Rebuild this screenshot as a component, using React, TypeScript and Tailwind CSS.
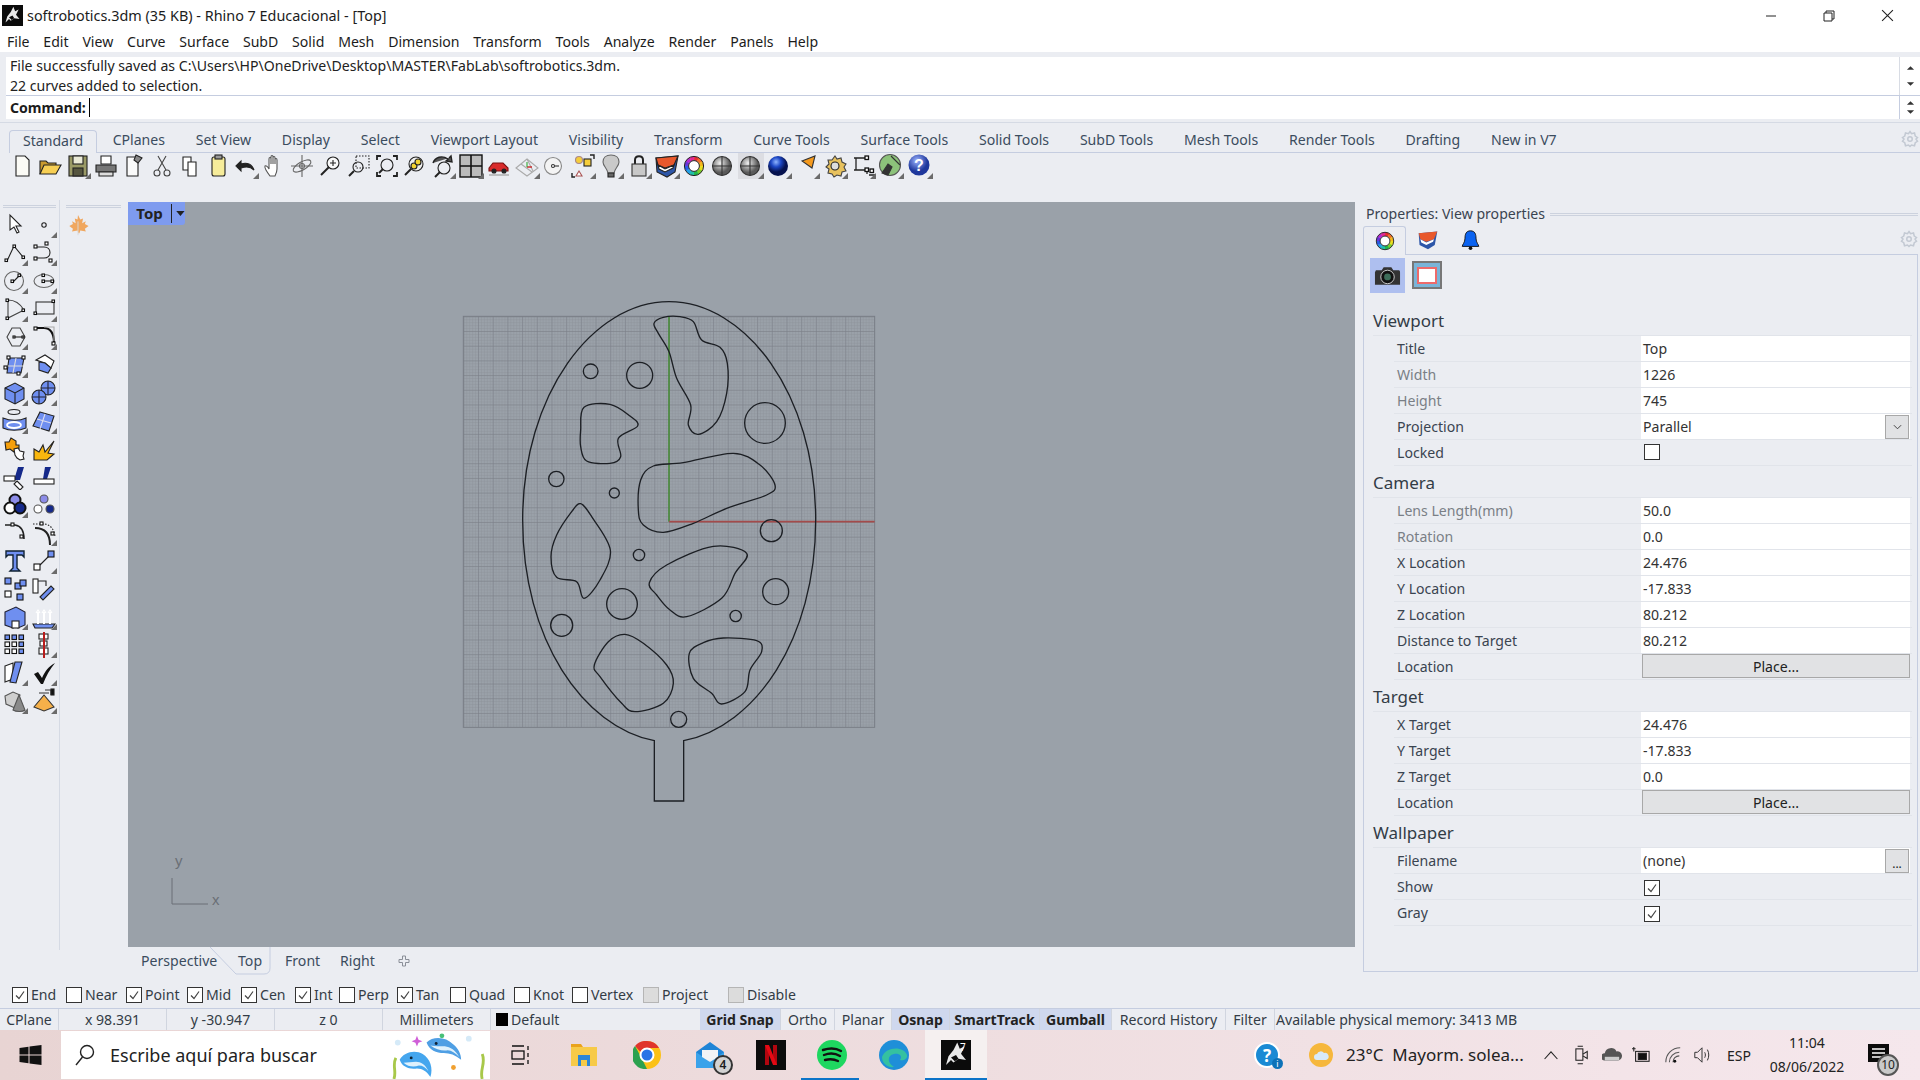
import type { ReactNode } from 'react';

const sans = "font-['Noto_Sans','Open_Sans',sans-serif]";

// smooth closed curve through points (catmull-rom to bezier)
const blob = (p: number[][]) => {
  const n = p.length;
  let d = `M${p[0][0]} ${p[0][1]}`;
  for (let i = 0; i < n; i++) {
    const a = p[(i - 1 + n) % n], b = p[i], c = p[(i + 1) % n], e = p[(i + 2) % n];
    d += ` C${b[0] + (c[0] - a[0]) / 6} ${b[1] + (c[1] - a[1]) / 6} ${c[0] - (e[0] - b[0]) / 6} ${c[1] - (e[1] - b[1]) / 6} ${c[0]} ${c[1]}`;
  }
  return d + 'Z';
};

const blobs = [
  [[612, 100], [640, 82], [690, 80], [730, 95], [755, 150], [810, 172], [832, 220], [830, 310], [800, 395], [745, 433], [715, 405], [722, 345], [680, 265], [657, 185], [625, 130]],
  [[392, 420], [402, 352], [480, 343], [540, 378], [563, 408], [505, 445], [512, 500], [480, 520], [410, 513], [392, 470]],
  [[565, 660], [572, 570], [610, 528], [700, 518], [850, 490], [930, 525], [975, 585], [950, 615], [830, 655], [730, 700], [640, 727], [580, 705]],
  [[392, 641], [425, 680], [481, 780], [450, 870], [402, 925], [380, 875], [320, 862], [303, 800], [320, 735], [365, 665]],
  [[598, 878], [650, 825], [790, 769], [890, 790], [855, 850], [815, 925], [710, 980], [660, 960], [620, 915]],
  [[433, 1125], [475, 1055], [525, 1033], [580, 1060], [650, 1125], [670, 1180], [640, 1240], [555, 1265], [515, 1240], [450, 1160]],
  [[718, 1090], [760, 1058], [820, 1044], [920, 1052], [935, 1085], [900, 1140], [885, 1205], [815, 1242], [785, 1210], [730, 1165]],
];

const holes = [[422, 244, 22], [569, 256, 39], [945, 399, 61], [319, 567, 23], [493, 609, 15], [964, 722, 33], [567, 795, 17], [516, 942, 46], [977, 905, 39], [857, 978, 17], [335, 1006, 33], [686, 1288, 24]];

const Drawing = () => (
  <svg viewBox="0 0 1350 1560" className="absolute left-[322px] top-[88px] w-[450px] h-[520px]" fill="none">
    <defs>
      <pattern id="minor" x="40" y="79" width="8.81" height="8.81" patternUnits="userSpaceOnUse">
        <path d="M0 0H8.81M0 0V8.81" stroke="#8a9098" strokeWidth="2.4" />
      </pattern>
      <pattern id="major" x="40" y="79" width="44.07" height="44.07" patternUnits="userSpaceOnUse">
        <path d="M0 0H44.07M0 0V44.07" stroke="#797e86" strokeWidth="3" />
      </pattern>
    </defs>
    <rect x="40" y="79" width="1234" height="1233" fill="url(#minor)" />
    <rect x="40" y="79" width="1234" height="1233" fill="url(#major)" stroke="#797e86" strokeWidth="3" />
    <path d="M657 695V79" stroke="#4a8a3c" strokeWidth="5" />
    <path d="M657 695H1274" stroke="#a34b4b" strokeWidth="5" />
    <g stroke="#1c1f24" strokeWidth="4">
      <path d="M613 1352C400 1310 218 1050 218 690C218 310 430 35 657 35C885 35 1097 310 1097 690C1097 1050 915 1310 701 1352V1533H613Z" />
      {blobs.map((b, i) => <path key={i} d={blob(b)} />)}
      {holes.map((c, i) => <circle key={i} cx={c[0]} cy={c[1]} r={c[2]} />)}
    </g>
  </svg>
);

// rainbow ring with dark rims, drawn as short arcs
const wheelColors = ['#e8302c', '#f0702a', '#f5b81e', '#e8e020', '#7ccf2a', '#22b84a', '#22c0a8', '#22a0e8', '#2a5ce8', '#6a35d8', '#b52ad0', '#e02a90'];
const Wheel = ({ cx, cy, r }: { cx: number; cy: number; r: number }) => (
  <g fill="none">
    {wheelColors.map((c, i) => {
      const a = (i / 12) * 2 * Math.PI - Math.PI / 2;
      const b = ((i + 1.1) / 12) * 2 * Math.PI - Math.PI / 2;
      return <path key={c} d={`M${cx + r * Math.cos(a)} ${cy + r * Math.sin(a)}A${r} ${r} 0 0 1 ${cx + r * Math.cos(b)} ${cy + r * Math.sin(b)}`} stroke={c} strokeWidth={r * 0.55} />;
    })}
    <circle cx={cx} cy={cy} r={r * 1.28} stroke="#222" strokeWidth="1" />
    <circle cx={cx} cy={cy} r={r * 0.72} stroke="#222" strokeWidth="1" fill="#fff" />
  </g>
);

// base for the small toolbar pictures, 26x26 with the grey flyout corner
const Ico = ({ fly = true, children }: { fly?: boolean; children: ReactNode }) => (
  <svg viewBox="0 0 26 26" className="w-[26px] h-[26px] shrink-0" fill="none" stroke="#222" strokeWidth="1.1">
    {children}
    {fly && <polygon points="26,26 26,20 20,26" fill="#6b6b6b" stroke="none" />}
  </svg>
);

const sq = (x: number, y: number, s = 3.5, f = '#fff') => <rect x={x} y={y} width={s} height={s} fill={f} stroke="#111" />;
const blue = '#6f8ff0';

const topIcons: [ReactNode, boolean][] = [
  [<path d="M7 3h9l4 4v16H7z" fill="#fbfbf6" />, false],
  [<><path d="M3 21V8h6l2 2h8v3" fill="#c99a2e" /><path d="M3 21l4-9h17l-5 9z" fill="#f7cf54" /></>, false],
  [<><rect x="4" y="3" width="18" height="20" fill="#9a9a66" /><rect x="8" y="3" width="10" height="8" fill="#e9e9d6" /><rect x="8" y="15" width="10" height="8" fill="#55553f" /></>, true],
  [<><path d="M8 3h10v8H8z" fill="#fff" /><path d="M3 12h20v7H3z" fill="#777" /><path d="M6 19h14v4H6z" fill="#ddd" /></>, false],
  [<><path d="M6 4h11v19H6z" fill="#fafafa" /><path d="M15 2l6 3-4 5-4-3z" fill="#888" /></>, false],
  [<g stroke="#444"><path d="M9 3l8 14M17 3L9 17" /><circle cx="8" cy="20" r="3" /><circle cx="18" cy="20" r="3" /></g>, false],
  [<g fill="#fff"><path d="M6 4h8v13H6z" /><path d="M11 9h8v14h-8z" /></g>, false],
  [<><rect x="7" y="4" width="13" height="19" rx="2" fill="#f6ec9a" /><rect x="10" y="2" width="7" height="4" fill="#999" /></>, false],
  [<path d="M3 13l5-5v3c6-2 11 0 13 6-3-3-7-4-13-2v3z" fill="#222" />, true],
  [<path d="M9 23c-3-4-6-8-5-10 1-1 3 1 4 3V6c0-2 2-2 2 0v5V4c0-2 2-2 2 0v7V5c0-2 2-2 2 0v6V7c0-2 2-2 2 0v9c0 3-1 5-2 7z" fill="#fff" stroke="#555" />, false],
  [<g stroke="#666"><circle cx="13" cy="13" r="2.5" /><path d="M2 13h22M13 2v22" /><ellipse cx="13" cy="13" rx="10" ry="4" transform="rotate(-30 13 13)" /></g>, false],
  [<><circle cx="15" cy="10" r="6" fill="#f8f8f8" /><path d="M11 14l-8 8" strokeWidth="2" /><path d="M12 10h6M15 7v6" /></>, false],
  [<><circle cx="12" cy="14" r="5" /><path d="M8 18l-5 5" strokeWidth="2" /><rect x="10" y="3" width="13" height="12" strokeDasharray="1.5 1.5" /></>, false],
  [<><circle cx="13" cy="12" r="6" /><path d="M9 16l-4 4" strokeWidth="2" /><path d="M3 7V3h4M19 3h4v4M3 19v4h4M23 19v4h-4" strokeWidth="1.8" /></>, false],
  [<><circle cx="14" cy="11" r="7" fill="#eee" /><path d="M9 16l-6 6" strokeWidth="2" /><circle cx="12" cy="13" r="3" fill="#f3d332" /><circle cx="16" cy="9" r="3" fill="#f3d332" /></>, false],
  [<><circle cx="14" cy="15" r="6" /><path d="M10 19l-5 5" strokeWidth="2" /><path d="M3 10c2-6 9-8 15-4l-2 2 6 1-1-6-2 2" strokeWidth="1.4" fill="#555" /></>, true],
  [<><rect x="2" y="2" width="22" height="22" fill="#bbb" stroke="#111" strokeWidth="1.4" /><path d="M13 2v22M2 13h22" stroke="#111" strokeWidth="1.6" /></>, true],
  [<><path d="M3 15l4-5h10l5 5v3H3z" fill="#d92b2b" stroke="#7a1010" /><circle cx="8" cy="18" r="2" fill="#222" /><circle cx="18" cy="18" r="2" fill="#222" /><path d="M3 22h20" stroke="#999" /></>, false],
  [<g stroke="#aaa"><path d="M2 15l11-9 11 9-11 8z" /><path d="M7 11l11 8M13 6l6 12" /><path d="M13 14h5" stroke="#c22" strokeWidth="1.4" /><path d="M13 14V9" stroke="#3a3" /></g>, true],
  [<g stroke="#888"><circle cx="11" cy="13" r="8.5" fill="#f4f4f4" /><path d="M11 13h6" stroke="#333" /><circle cx="11" cy="13" r="1.5" fill="#fff" stroke="#333" /></g>, false],
  [<><circle cx="9" cy="7" r="3.5" fill="#f5cd3a" stroke="#a88" /><rect x="14" y="6" width="7" height="7" fill="#f5cd3a" /><path d="M9 18l-3 5h6z" stroke="#a55" fill="#fff" /><path d="M2 20v4h3M24 6V2h-4" strokeWidth="1.4" /></>, true],
  [<><path d="M13 2c5 0 8 3 8 7 0 4-4 6-5 11h-6C9 15 5 13 5 9c0-4 3-7 8-7z" fill="#c9c9c9" stroke="#666" /><path d="M10 20h6v4h-6z" fill="#666" /></>, true],
  [<><path d="M9 11V7c0-5 8-5 8 0v4" strokeWidth="2" /><rect x="6" y="11" width="14" height="12" fill="#c8c8c8" stroke="#333" /></>, true],
  [<><path d="M2 5l22-2-3 16-8 5-10-5z" fill="#2d56a8" /><path d="M2 5l22-2-4 9-9 3-7-3z" fill="#e8582c" /><path d="M4 12l7 4 9-4-1 3-8 4-6-3z" fill="#fff" /></>, true],
  [<Wheel cx={12} cy={13} r={7.5} />, false],
  [<><defs><radialGradient id="sp1" cx=".4" cy=".35"><stop offset="0" stopColor="#f2f2f2" /><stop offset="1" stopColor="#5a5a5a" /></radialGradient></defs><circle cx="12" cy="13" r="9.5" fill="url(#sp1)" stroke="#333" /><path d="M12 3.5v19M2.5 13h19" stroke="#333" /></>, false],
  [<><rect x="0" y="0" width="26" height="26" fill="#dcdde2" stroke="none" /><circle cx="12" cy="13" r="9.5" fill="url(#sp1)" stroke="#333" /><path d="M12 3.5v19M2.5 13h19" stroke="#333" /></>, true],
  [<><defs><radialGradient id="sp2" cx=".4" cy=".3"><stop offset="0" stopColor="#8fb4ff" /><stop offset=".5" stopColor="#1c46c4" /><stop offset="1" stopColor="#06124f" /></radialGradient></defs><circle cx="12" cy="13" r="10" fill="url(#sp2)" stroke="none" /></>, true],
  [<path d="M8 8L21 3l-3 12z" fill="#f59a1e" stroke="#333" />, true],
  [<g><path d="M13 3l2 3 4-1 1 4 4 2-2 3 2 4-4 1-1 4-4-1-3 2-2-3-4-1 1-4-3-2 3-3-1-4 4 0z" fill="#e8c25e" stroke="#444" /><circle cx="13" cy="13" r="4" fill="#ddd" /></g>, true],
  [<g strokeWidth="1.3"><path d="M4 5h12M4 17h13v4M6 5v12M19 22h6" />{sq(15, 3)}{sq(15, 15)}{sq(20, 16)}</g>, true],
  [<><circle cx="12" cy="12" r="10.5" fill="#8cc27a" stroke="#555" /><path d="M4 20l6-9 4 3-4 8zM13 3l9 9" stroke="#333" fill="#333" /></>, true],
  [<><defs><radialGradient id="sp3" cx=".4" cy=".3"><stop offset="0" stopColor="#9db4ff" /><stop offset="1" stopColor="#1e379c" /></radialGradient></defs><circle cx="12" cy="12" r="10.5" fill="url(#sp3)" stroke="none" /><text x="12" y="18" textAnchor="middle" fontSize="16" fontWeight="700" fill="#fff" stroke="none" fontFamily="Liberation Sans">?</text></>, true],
];

const leftIcons: [ReactNode, boolean][] = [
  [<path d="M8 3v15l4-3 3 6 2-1-3-6h5z" fill="#fff" />, false],
  [<circle cx="13" cy="13" r="2.2" />, true],
  [<><path d="M5 21l7-15 9 11" />{sq(3, 19, 2.5)}{sq(11, 5, 2.5)}{sq(20, 16, 2.5)}</>, true],
  [<><path d="M5 7h8c8 0 8 11 0 11H5" />{sq(3, 5, 3)}{sq(14, 2, 3)}{sq(3, 17, 3)}{sq(18, 19, 3)}</>, true],
  [<><circle cx="12" cy="13" r="9.5" stroke="#666" /><path d="M11 14l6-6" />{sq(9, 12, 2.5)}{sq(16, 6, 2.5)}</>, true],
  [<><ellipse cx="13" cy="13" rx="10" ry="6.5" stroke="#666" /><path d="M13 13h9" />{sq(11, 6, 2.5)}{sq(11, 12, 2.5)}{sq(20, 12, 2.5)}</>, true],
  [<><path d="M6 4c8 0 13 5 16 10L6 22z" stroke="#444" />{sq(4, 3, 2.5)}{sq(20, 13, 2.5)}{sq(4, 21, 2.5)}</>, true],
  [<><rect x="5" y="6" width="18" height="12" stroke="#333" />{sq(3, 16, 2.5)}{sq(21, 4, 2.5)}</>, true],
  [<><path d="M10 4h8l5 9-5 9h-8l-5-9z" stroke="#444" /><path d="M13 13h7" />{sq(11, 12, 2)}{sq(20, 12, 2)}</>, true],
  [<><path d="M5 4h8c6 0 10 5 10 14" stroke="#111" strokeWidth="2.2" /><path d="M13 3h10v14" stroke="#aaa" />{sq(3, 3, 3)}{sq(21, 18, 3)}</>, true],
  [<><path d="M7 6h15l-3 15H5z" fill={blue} /><path d="M6 14h15M14 6l-3 15" stroke="#ddd" />{sq(5, 4, 3)}{sq(20, 4, 3)}{sq(2, 14, 3)}{sq(15, 20, 3)}</>, true],
  [<><path d="M5 8l9-5 9 6-3 7-6-5z" fill="#fff" /><path d="M8 10l6 1 6 5-3 5-9-3z" fill={blue} /></>, true],
  [<><path d="M3 8l10-5 9 5v11l-9 5-10-5z" fill={blue} stroke="#222" /><path d="M3 8l10 5 9-5M13 13v11" stroke="#222" /></>, true],
  [<><circle cx="17" cy="8" r="7" fill={blue} /><circle cx="8" cy="17" r="7" fill={blue} /><path d="M10 8h14M17 1v14M1 17h14M8 10v14" stroke="#223" /></>, true],
  [<><ellipse cx="12" cy="4" rx="6" ry="2.5" /><path d="M1 10c7 3 17 3 23 0v10c-7 3-17 3-23 0z" fill={blue} /><ellipse cx="12" cy="17" rx="7" ry="3" stroke="#fff" strokeWidth="1.8" /></>, true],
  [<><path d="M9 4l14 4-5 15-16-5z" fill={blue} /><path d="M6 11l14 4M14 6l-5 15" stroke="#dde" /></>, true],
  [<><path d="M3 6h4l2-4 5 3v4h3v4h-4l-1 3-4-3-4 1z" fill="#f59f0b" /><path d="M12 13l4-1 2 3 4 1-1 4 1 3-4 1-3-2-2-3z" fill="#fff" /></>, false],
  [<path d="M3 24V13l5 3 4-7 2 7 9-11-6 12 6 1-7 6z" fill="#f9b70e" stroke="#222" />, false],
  [<><path d="M16 3h6l-4 13h-6z" fill="#15298a" stroke="none" /><rect x="2" y="12" width="11" height="5" fill="#fff" /><path d="M15 17l6 6-3 3-6-6z" fill="#fff" /></>, false],
  [<><path d="M14 3h6l-4 12h-4z" fill="#15298a" stroke="none" /><rect x="3" y="15" width="20" height="5" fill="#fff" /></>, false],
  [<><circle cx="13" cy="8" r="5.5" fill="#8c8ce8" stroke="#111" strokeWidth="2" /><circle cx="8" cy="16" r="5.5" fill="#fff" stroke="#111" strokeWidth="2" /><circle cx="18" cy="16" r="5.5" fill="#15298a" stroke="#111" strokeWidth="2" /></>, true],
  [<><circle cx="13" cy="7" r="4" fill="#8c8ce8" stroke="#555" /><circle cx="7" cy="17" r="4" fill="#fff" stroke="#555" /><circle cx="19" cy="17" r="4" fill="#15298a" stroke="#555" /></>, false],
  [<><path d="M3 5h10c6 1 9 6 9 14" strokeWidth="1.6" />{sq(9, 3, 3)}{sq(18, 15, 3)}</>, false],
  [<><path d="M4 8c9 0 15 5 15 17" strokeWidth="2" /><path d="M2 4h12c6 1 9 6 10 12" strokeDasharray="1.5 1.5" />{sq(9, 2, 3)}{sq(20, 12, 3)}</>, true],
  [<path d="M4 3h18v6l-2-2h-5v13l3 3H8l3-3V7H6L4 9z" fill={blue} stroke="#123" strokeWidth="1.4" />, false],
  [<><path d="M9 17l9-9" />{sq(3, 16, 6)}{sq(17, 3, 6, blue)}</>, true],
  [<>{sq(3, 2, 6, blue)}{sq(13, 7, 6, blue)}{sq(3, 15, 6)}{sq(18, 4, 6, blue)}{sq(15, 18, 6, blue)}</>, false],
  [<><rect x="2" y="3" width="5" height="14" fill="#fff" /><path d="M9 21l11-11 3 3-11 11z" fill={blue} /><path d="M7 5h8v5" /></>, false],
  [<><path d="M3 8l11-5 9 5v13l-7 3v-6l-5 1v5l-8-3z" fill={blue} stroke="#223" /><rect x="10" y="17" width="7" height="7" fill="#fff" /></>, true],
  [<><path d="M2 20h22l-3 4H4z" fill={blue} /><g stroke="#fff" strokeWidth="2"><path d="M7 20V8M13 20V8M19 20V8" /></g><path d="M5 9l2-3 2 3M11 9l2-3 2 3M17 9l2-3 2 3" stroke="#fff" /></>, true],
  [<>{[3, 10, 17].map((y) => [3, 10, 17].map((x) => <g key={`${x}${y}`}>{sq(x, y, 4.5, x === 17 || y === 3 ? blue : '#fff')}</g>))}</>, false],
  [<><rect x="8" y="2" width="9" height="5" fill="#fff" /><rect x="9" y="9" width="7" height="5" fill="#fff" /><rect x="8" y="16" width="9" height="6" fill="#fff" /><path d="M13 0v26" stroke="#b91c1c" strokeWidth="2" /></>, true],
  [<><path d="M3 6l8-3v16l-8 3z" fill="#fff" /><path d="M13 2h7l-6 21-6-1z" fill={blue} /></>, true],
  [<path d="M3 14l4-2 4 6C14 11 18 6 24 3c-5 6-9 13-12 21h-2z" fill="#111" stroke="none" />, true],
  [<><path d="M3 8l8-4 7 3-5 13-9-4z" fill="#cfcfcf" stroke="#555" /><path d="M17 7l-6 15c3 2 10 2 12 0z" fill="#8a8a8a" stroke="#555" /></>, true],
  [<><path d="M13 7L3 19l10 4 10-4z" fill="#f5b04a" stroke="#333" /><path d="M8 5h10M14 2h6v5" stroke="#333" /><rect x="20" y="1" width="3" height="6" fill="#111" /></>, true],
];

const Section = ({ title, children }: { title: string; children: ReactNode }) => (
  <div>
    <div className="h-[32px] ml-[9px] border-b border-[#e1e4ea] text-[#333c46] text-[17px] leading-[34px]">{title}</div>
    {children}
  </div>
);

const Row = ({ label, muted, children }: { label: string; muted?: boolean; children: ReactNode }) => (
  <div className="h-[26px] ml-[30px] flex border-b border-[#e1e4ea]">
    <div className={`w-[247px] pl-[3px] leading-[26px] ${muted ? 'text-[#7a7f86]' : 'text-[#3a4450]'}`}>{label}</div>
    {children}
  </div>
);

const Val = ({ v, btn }: { v: string; btn?: string }) => (
  <div className="w-[269px] bg-white flex items-center pl-[2px] text-[#333] leading-[26px]">
    <span className="flex-1">{v}</span>
    {btn !== undefined && (
      <span className="w-[24px] h-[24px] mr-[1px] bg-[#e1e2e4] border border-[#a8a8a8] flex items-center justify-center text-[12px] text-[#222]">
        {btn === 'v' ? <svg viewBox="0 0 10 6" className="w-[9px] h-[6px]" fill="none" stroke="#333"><path d="M1 1l4 4 4-4" /></svg> : <span className="leading-none mb-[-6px]">...</span>}
      </span>
    )}
  </div>
);

const Place = () => (
  <div className="w-[268px] h-[24px] ml-[1px] bg-[#e1e2e4] border border-[#a8a8a8] text-center text-[#222] leading-[23px]">Place...</div>
);

const Check = ({ on, dim }: { on?: boolean; dim?: boolean }) => (
  <span className={`inline-flex w-[16px] h-[16px] border items-center justify-center shrink-0 ${dim ? 'border-[#b5b5b5] bg-[#dcdcdc]' : 'border-[#333] bg-white'}`}>
    {on && <svg viewBox="0 0 12 12" className="w-[12px] h-[12px]" fill="none" stroke="#444" strokeWidth="1.2"><path d="M2 6.5l3 3 5-7" /></svg>}
  </span>
);

const Gear = () => (
  <svg viewBox="0 0 24 24" className="w-[18px] h-[18px]" fill="none" stroke="#c3c9d3" strokeWidth="2"><circle cx="12" cy="12" r="3" /><path d="M12 2l2 3 4-1 1 4 3 2-2 2 2 3-3 2-1 4-4-1-2 2-2-2-4 1-1-4-3-2 2-3-2-2 3-2 1-4 4 1z" /></svg>
);

const Grip = ({ className }: { className: string }) => <div className={`h-[3px] border-y border-[#ccd2de] ${className}`} />;

const Spin = ({ up = true }: { up?: boolean }) => (
  <svg viewBox="0 0 10 6" className="w-[9px] h-[6px]" fill="#333">{up ? <path d="M1 5l4-4 4 4z" /> : <path d="M1 1h8l-4 4z" />}</svg>
);

const tabs = ['Standard', 'CPlanes', 'Set View', 'Display', 'Select', 'Viewport Layout', 'Visibility', 'Transform', 'Curve Tools', 'Surface Tools', 'Solid Tools', 'SubD Tools', 'Mesh Tools', 'Render Tools', 'Drafting', 'New in V7'];
const menu = ['File', 'Edit', 'View', 'Curve', 'Surface', 'SubD', 'Solid', 'Mesh', 'Dimension', 'Transform', 'Tools', 'Analyze', 'Render', 'Panels', 'Help'];
const snaps: [string, number, boolean, boolean?][] = [
  ['End', 54, true], ['Near', 60, false], ['Point', 61, true], ['Mid', 54, true], ['Cen', 54, true], ['Int', 44, true],
  ['Perp', 58, false], ['Tan', 53, true], ['Quad', 64, false], ['Knot', 58, false], ['Vertex', 71, false], ['Project', 85, false, true], ['Disable', 90, false, true],
];
const status: [string, number, boolean?][] = [['CPlane', 59], ['x 98.391', 108], ['y -30.947', 108], ['z 0', 108], ['Millimeters', 108]];
const toggles: [string, number, boolean][] = [['Grid Snap', 81, true], ['Ortho', 54, false], ['Planar', 57, false], ['Osnap', 58, true], ['SmartTrack', 90, true], ['Gumball', 72, true], ['Record History', 114, false], ['Filter', 49, false]];

const RhinoMark = ({ size }: { size: string }) => (
  <svg viewBox="0 0 24 24" className={size}>
    <rect width="24" height="24" fill="#0b0b0b" />
    <path d="M4 20l2-7 4-5 3-6 2 5 4-2-3 6 4 5-6-1-4 3-2-2z" fill="#e9e9e9" />
    <path d="M8 14l4-2 2 3-3 2z" fill="#0b0b0b" />
  </svg>
);

const Tray = ({ w, children }: { w: number; children: ReactNode }) => (
  <div className="flex items-center justify-center shrink-0" style={{ width: w }}>{children}</div>
);

const Taskbar = () => (
  <div className="h-[50px] flex items-stretch bg-gradient-to-r from-[#e8d4d3] to-[#f5e7ec] relative">
    <div className="w-[61px] flex items-center justify-center">
      <svg viewBox="0 0 22 20" className="w-[23px] h-[20px]" fill="#111"><path d="M0 3l9-1.3V9.5H0zM10 1.500L22 0v9.5H10zM0 10.5h9v7.8L0 17zM10 10.5h12V20l-12-1.6z" /></svg>
    </div>
    <div className="w-[429px] my-[1px] bg-white flex items-center relative overflow-hidden">
      <svg viewBox="0 0 24 24" className="ml-[12px] w-[24px] h-[24px]" fill="none" stroke="#222" strokeWidth="1.4"><circle cx="14" cy="9" r="6.5" /><path d="M9.5 14L3 22" /></svg>
      <span className="ml-[13px] text-[18px] text-[#222]">Escribe aquí para buscar</span>
      <svg viewBox="0 0 100 50" className="absolute right-0 top-0 w-[100px] h-[48px]">
        <path d="M2 50c3-8-2-14 2-22M94 50c-3-10 4-16 0-26" stroke="#a8c84a" strokeWidth="3" fill="none" />
        <path d="M8 30c4-8 16-11 24-6 8 5 11 15 8 24-4-6-8-9-14-9-8 1-15-1-18-9z" fill="#45a6ee" />
        <path d="M12 33c5 4 10 5 16 3 4 0 7 2 10 6-3-7-8-10-13-10-4 0-9 1-13 1z" fill="#dff1fc" />
        <path d="M36 12c7-7 20-6 28 2 5 4 8 10 8 16-6-5-12-7-18-7-8 0-15-3-18-11z" fill="#4f9fe4" />
        <path d="M40 15c6 4 12 6 18 5 4 0 8 3 12 7-4-7-9-10-15-11-5 0-10 0-15-1z" fill="#dff1fc" />
        <circle cx="20" cy="28" r="1.5" fill="#123" /><circle cx="46" cy="13" r="1.5" fill="#123" />
        <path d="M26 5l1.6 4 4 1.6-4 1.6-1.6 4-1.6-4-4-1.6 4-1.6z" fill="#d05fd8" />
        <circle cx="52" cy="5" r="2.5" fill="#48c078" /><circle cx="64" cy="38" r="2.5" fill="#f0a030" /><circle cx="6" cy="12" r="3" fill="#d5eaf8" /><circle cx="80" cy="8" r="3" fill="#d5eaf8" />
      </svg>
    </div>
    {/* pinned apps */}
    <div className="flex">
      <div className="w-[62px] flex items-center justify-center">
        <svg viewBox="0 0 20 20" className="w-[20px] h-[20px]" fill="none" stroke="#111" strokeWidth="1.3"><path d="M1 1h12M1 19h12" /><rect x="1" y="6" width="12" height="8" /><path d="M17 1v4M17 8v4M17 15v4" /></svg>
      </div>
      <div className="w-[63px] flex items-center justify-center">
        <svg viewBox="0 0 28 24" className="w-[28px] h-[24px]"><path d="M1 1h10l2 3H1z" fill="#eaa31c" /><rect x="1" y="4" width="26" height="19" fill="#f7ca48" /><path d="M8 12h12v11h-3v-6h-6v6H8z" fill="#2c86d6" /></svg>
      </div>
      <div className="w-[63px] flex items-center justify-center">
        <svg viewBox="0 0 28 28" className="w-[28px] h-[28px]"><circle cx="14" cy="14" r="14" fill="#fbc116" /><path d="M14 0a14 14 0 0112 7H14a7 7 0 00-6.5 4L2 5a14 14 0 0112-5z" fill="#e0352c" /><path d="M2 5l6 11 6 12A14 14 0 012 5z" fill="#2ca14f" /><circle cx="14" cy="14" r="6.5" fill="#2a74e6" stroke="#fff" strokeWidth="2" /></svg>
      </div>
      <div className="w-[63px] flex items-center justify-center relative">
        <svg viewBox="0 0 30 28" className="w-[30px] h-[28px]"><path d="M1 11L15 1l14 10v16H1z" fill="#1f84d6" /><path d="M1 11l14 10 14-10v16H1z" fill="#3aa2ea" /><path d="M7 9h16v7l-8 5-8-5z" fill="#f2f4f6" /></svg>
        <span className="absolute left-[35px] top-[25px] w-[20px] h-[20px] rounded-full bg-[#d2d2d2] border-2 border-[#333] text-[12px] font-semibold flex items-center justify-center leading-none">4</span>
      </div>
      <div className="w-[60px] flex items-center justify-center">
        <svg viewBox="0 0 30 30" className="w-[30px] h-[30px]"><rect width="30" height="30" fill="#0c0c0c" /><path d="M9 5h4v20H9zM17 5h4v20h-4z" fill="#b1060f" /><path d="M9 5h4l8 20h-4z" fill="#e50914" /></svg>
      </div>
      <div className="w-[62px] flex items-center justify-center relative">
        <svg viewBox="0 0 30 30" className="w-[30px] h-[30px]"><circle cx="15" cy="15" r="15" fill="#1ed760" /><path d="M6 10c6-2 13-2 18 1M7 15c5-2 11-2 16 1M8 20c4-1 9-1 13 1" stroke="#111" strokeWidth="2.4" fill="none" strokeLinecap="round" /></svg>
        <span className="absolute left-0 right-[4px] bottom-0 h-[2px] bg-[#0b74c8]" />
      </div>
      <div className="w-[62px] flex items-center justify-center">
        <svg viewBox="0 0 30 30" className="w-[30px] h-[30px]"><circle cx="15" cy="15" r="15" fill="#1f8fd8" /><path d="M3 17c4-11 22-11 25-2 1 4-4 6-7 5 3-4-1-7-6-6-7 1-7 9 0 13-7 1-12-4-12-10z" fill="#35c1a0" /></svg>
      </div>
      <div className="w-[62px] bg-[#f5f0f0] flex items-center justify-center relative">
        <RhinoMark size="w-[30px] h-[30px]" />
        <span className="absolute left-[35px] top-[12px] text-white text-[10px] leading-none">7</span>
        <span className="absolute left-0 right-0 bottom-0 h-[2px] bg-[#0b74c8]" />
      </div>
    </div>
    {/* tray */}
    <div className="absolute left-[1252px] top-0 h-full flex text-[#222]">
      <Tray w={30}>
        <div className="relative">
          <span className="w-[26px] h-[26px] rounded-full bg-[#1a8ad4] border-2 border-white text-white font-bold text-[17px] flex items-center justify-center leading-none">?</span>
          <span className="absolute right-[-3px] bottom-[-1px] w-[11px] h-[11px] rounded-full bg-[#0d72b8] text-white text-[9px] flex items-center justify-center leading-none">i</span>
        </div>
      </Tray>
      <div className="w-[24px]" />
      <Tray w={30}>
        <svg viewBox="0 0 24 24" className="w-[24px] h-[24px]"><circle cx="12" cy="12" r="12" fill="#f6b73c" /><path d="M8 17a3 3 0 010-6 4 4 0 017-1 3.5 3.5 0 012 7z" fill="#d8eaf8" /></svg>
      </Tray>
      <div className="w-[10px]" />
      <span className="w-[190px] text-[17px] leading-[50px] whitespace-nowrap">23°C&nbsp; Mayorm. solea...</span>
      <Tray w={30}><svg viewBox="0 0 20 12" className="w-[16px] h-[10px]" fill="none" stroke="#222" strokeWidth="1.3"><path d="M2 11l8-9 8 9" /></svg></Tray>
      <div className="w-[1px]" />
      <Tray w={30}><svg viewBox="0 0 16 24" className="w-[14px] h-[22px]" fill="none" stroke="#222" strokeWidth="1.2"><rect x="1" y="5" width="8" height="13" /><path d="M9 11l5-3v8l-5-3M3 2h6M3 22h6" /></svg></Tray>
      <Tray w={30}><svg viewBox="0 0 22 20" className="w-[20px] h-[18px]"><path d="M3 16a4 4 0 010-8 7 7 0 0113-2 5 5 0 012 10z" fill="#555" /><path d="M3 12h16v4H3z" fill="#ccc" /></svg></Tray>
      <Tray w={28}><svg viewBox="0 0 22 20" className="w-[20px] h-[18px]" fill="none" stroke="#222" strokeWidth="1.2"><rect x="5" y="6" width="15" height="11" /><rect x="8" y="8" width="9" height="7" fill="#111" /><path d="M1 3h4M3 1v5" /></svg></Tray>
      <Tray w={36}><svg viewBox="0 0 20 20" className="w-[18px] h-[18px]" fill="none" stroke="#555" strokeWidth="1.2"><path d="M2 18C2 9 9 2 18 2M6 18c0-6 5-11 11-11M10 18c0-4 3-7 7-7" /><circle cx="12" cy="17" r="1.6" fill="#111" stroke="none" /></svg></Tray>
      <Tray w={21}><svg viewBox="0 0 20 22" className="w-[18px] h-[20px]" fill="none" stroke="#333" strokeWidth="1.1"><path d="M2 8h3l5-5v16l-5-5H2zM13 8c1 2 1 4 0 6M16 5c2 4 2 8 0 12" /></svg></Tray>
      <Tray w={54}><span className="text-[14px]">ESP</span></Tray>
      <div className="w-[82px] text-center text-[14px] leading-[24px] pt-[1px] whitespace-nowrap"><div>11:04</div><div>08/06/2022</div></div>
      <div className="w-[70px] relative">
        <svg viewBox="0 0 21 18" className="absolute left-[20px] top-[14px] w-[21px] h-[18px]"><rect width="21" height="18" fill="#0b0b0b" /><path d="M4 5h13M4 9h13M4 13h13" stroke="#fff" strokeWidth="1.5" /></svg>
        <span className="absolute left-[29px] top-[24px] w-[22px] h-[22px] rounded-full bg-[#c9c9c9] border-2 border-[#555] text-[12px] flex items-center justify-center leading-none">10</span>
      </div>
    </div>
  </div>
);

export default function App() {
  return (
    <div className={`${sans} w-[1920px] h-[1080px] overflow-hidden flex flex-col bg-[#ebedf2] text-[14.1px] text-[#1c1c1c]`}>
      <div className="h-[31px] bg-white flex items-center pl-[2px] shrink-0">
        <RhinoMark size="w-[21px] h-[21px]" />
        <span className="ml-[4px] text-[14.4px]">softrobotics.3dm (35 KB) - Rhino 7 Educacional - [Top]</span>
        <div className="ml-auto flex items-center">
          <svg viewBox="0 0 12 12" className="w-[12px] h-[12px] mr-[46px]" stroke="#222"><path d="M1 6h10" /></svg>
          <svg viewBox="0 0 12 12" className="w-[12px] h-[12px] mr-[46px]" fill="none" stroke="#222"><path d="M1 3h8v8H1zM3 3V1h8v8H9" /></svg>
          <svg viewBox="0 0 12 12" className="w-[13px] h-[13px] mr-[26px]" stroke="#222"><path d="M1 1l10 10M11 1L1 11" /></svg>
        </div>
      </div>
      <div className="h-[21px] bg-white flex items-center gap-[13.8px] pl-[7px] shrink-0">
        {menu.map((m) => <span key={m}>{m}</span>)}
      </div>

      {/* command area */}
      <div className="mt-[5px] ml-[6px] h-[62px] bg-white flex shrink-0">
        <div className="flex-1 min-w-0">
          <div className="h-[38px] pl-[4px] text-[#222] leading-[20px] -mt-[1px] pb-[1px] box-content">
            <div>File successfully saved as C:\Users\HP\OneDrive\Desktop\MASTER\FabLab\softrobotics.3dm.</div>
            <div>22 curves added to selection.</div>
          </div>
          <div className="h-[24px] border-t border-[#c5cde0] pl-[4px] flex items-center">
            <span className="font-bold">Command:</span>
            <span className="ml-[3px] w-px h-[19px] bg-black" />
          </div>
        </div>
        <div className="w-[21px] bg-[#ebedf2] flex flex-col items-center">
          <div className="h-[38px] w-full flex flex-col items-center justify-between py-[8px] bg-white border-l border-[#d8dce4]"><Spin /><Spin up={false} /></div>
          <div className="h-[24px] w-full flex flex-col items-center justify-center gap-[3px] border-t border-[#c5cde0] border-l bg-white"><Spin /><Spin up={false} /></div>
        </div>
      </div>

      {/* toolbar tabs */}
      <div className="mt-[3px] border-t border-[#d5dae4] h-[31px] flex items-end pl-[9px] relative shrink-0">
        <div className="flex flex-1 border-b border-[#c5cde0] h-[23px] text-[#3b4c5e]">
          {tabs.map((t, i) => (
            <span key={t} className={`leading-[20px] whitespace-nowrap ${i === 0 ? 'px-[13px] bg-[#ebedf2] border-x border-t border-[#c5cde0] rounded-t-[4px] h-[23px]' : 'px-[15.4px]'}`}>{t}</span>
          ))}
        </div>
        <div className="absolute right-[1px] top-[7px]"><Gear /></div>
      </div>
      <div className="h-[47px] pl-[9px] flex gap-[2.06px] shrink-0">
        {topIcons.map(([ic, fly], i) => <Ico key={i} fly={fly}>{ic}</Ico>)}
      </div>

      {/* main area */}
      <div className="h-[782px] flex shrink-0">
        <div className="w-[60px] border-r border-[#d5dae4] px-[2px] pt-[5px] mb-[32px]">
          <Grip className="mx-[1px]" />
          <div className="grid grid-cols-2 gap-x-[2px] gap-y-[2px] pt-[4px]">
            {leftIcons.map(([ic, fly], i) => <Ico key={i} fly={fly}>{ic}</Ico>)}
          </div>
        </div>
        <div className="w-[68px] px-[6px] pt-[5px]">
          <Grip className="w-[55px]" />
          <svg viewBox="0 0 24 24" className="w-[22px] h-[24px] ml-[1px] mt-[5px]"><path d="M12 1l2.5 5 3-1-1 5 4-2-1 3 4 2-4 3 1 3-6-1-1 3h-1l-1-3-6 1 1-3-4-3 4-2-1-3 4 2-1-5 3 1z" fill="#f0a75f" /><path d="M12 8v15" stroke="#d9d9d9" /></svg>
        </div>

        <div className="w-[1227px] flex flex-col pt-[2px]">
          <div className="h-[745px] bg-[#9aa1a9] relative">
            <div className="absolute left-0 top-0 w-[57px] h-[23px] bg-[#7e9bef] rounded-br-[3px] flex items-center">
              <span className="w-[44px] text-center font-bold text-[15px] text-[#222]">Top</span>
              <span className="w-px h-[19px] bg-[#222]" />
              <svg viewBox="0 0 10 6" className="ml-[4px] w-[9px] h-[5px]" fill="#222"><path d="M0 0h10L5 6z" /></svg>
            </div>
            <Drawing />
            {/* world axis icon */}
            <svg className="absolute left-[40px] top-[649px] w-[60px] h-[60px] text-[#6a6f76]" viewBox="0 0 60 60" fill="none">
              <path d="M4 27V53H40" stroke="currentColor" />
              <text x="7" y="15" fontSize="15" fill="currentColor" fontFamily="Liberation Sans">y</text>
              <text x="44" y="54" fontSize="15" fill="currentColor" fontFamily="Liberation Sans">x</text>
            </svg>
          </div>
          <div className="h-[28px] flex items-center pl-[13px] text-[#3b4c5e] relative">
            <svg viewBox="0 0 64 28" className="absolute left-[82px] top-0 w-[64px] h-[28px]" fill="none" stroke="#c5cde0"><path d="M0 0L26 27H54Q60 27 60 21V0" /></svg>
            <span className="w-[83px]">Perspective</span>
            <span className="w-[48px] pl-[14px] relative">Top</span>
            <span className="ml-[13px] w-[55px]">Front</span>
            <span className="w-[58px]">Right</span>
            <svg viewBox="0 0 12 12" className="w-[12px] h-[12px]" fill="none" stroke="#8a8f98"><path d="M4.5 1h3v3.5h3.5v3h-3.5v3.5h-3v-3.5h-3.5v-3h3.5z" /></svg>
          </div>
        </div>

        {/* properties panel */}
        <div className="flex-1 ml-[8px] mr-[2px] flex flex-col">
          <div className="h-[26px] flex items-center pl-[3px] text-[#3a4450] pt-[2px]">
            <span className="whitespace-nowrap">Properties: View properties</span>
            <Grip className="flex-1 ml-[5px]" />
          </div>
          <div className="h-[28px] flex relative">
            <div className="w-[43px] h-[29px] bg-[#ebedf2] border-x border-t border-[#c5cde0] rounded-t-[3px] flex items-center justify-center z-10">
              <svg viewBox="0 0 22 22" className="w-[20px] h-[20px]"><Wheel cx={11} cy={11} r={7.5} /></svg>
            </div>
            <div className="w-[43px] flex items-center justify-center">
              <svg viewBox="0 0 26 26" className="w-[22px] h-[24px]"><path d="M2 5l22-2-3 16-8 5-10-5z" fill="#2d56a8" /><path d="M2 5l22-2-4 9-9 3-7-3z" fill="#e8582c" /><path d="M4 12l7 4 9-4-1 3-8 4-6-3z" fill="#fff" /></svg>
            </div>
            <div className="w-[43px] flex items-center justify-center">
              <svg viewBox="0 0 20 24" className="w-[19px] h-[22px]"><path d="M10 2c5 0 6 4 6 8 0 5 3 7 3 9H1c0-2 3-4 3-9 0-4 1-8 6-8z" fill="#0b63f0" stroke="#111" /><circle cx="10" cy="21" r="2" fill="#111" /></svg>
            </div>
            <div className="absolute right-0 top-[4px]"><Gear /></div>
          </div>
          <div className="h-[718px] border border-[#c5cde0] pr-[5px]">
            <div className="h-[49px] flex items-start pl-[6px] pt-[3px] gap-[7px]">
              <div className="w-[35px] h-[35px] bg-[#aebfef] flex items-center justify-center">
                <svg viewBox="0 0 28 22" className="w-[27px] h-[22px]"><path d="M2 5h6l2-3h8l2 3h6a2 2 0 011 2v13H1V7z" fill="#333" /><circle cx="14" cy="12" r="7" fill="#111" stroke="#ccc" /><circle cx="14" cy="12" r="3.5" fill="#3e6e5a" /></svg>
              </div>
              <div className="w-[30px] h-[28px] mt-[3px] bg-[#7ab4d8] border-2 border-[#777] flex items-center justify-center">
                <span className="w-[20px] h-[17px] bg-white border-2 border-[#ee6a6a]" />
              </div>
            </div>
            <Section title="Viewport">
              <Row label="Title"><Val v="Top" /></Row>
              <Row label="Width" muted><Val v="1226" /></Row>
              <Row label="Height" muted><Val v="745" /></Row>
              <Row label="Projection"><Val v="Parallel" btn="v" /></Row>
              <Row label="Locked"><span className="pl-[3px] pt-[4px]"><Check /></span></Row>
            </Section>
            <Section title="Camera">
              <Row label="Lens Length(mm)" muted><Val v="50.0" /></Row>
              <Row label="Rotation" muted><Val v="0.0" /></Row>
              <Row label="X Location"><Val v="24.476" /></Row>
              <Row label="Y Location"><Val v="-17.833" /></Row>
              <Row label="Z Location"><Val v="80.212" /></Row>
              <Row label="Distance to Target"><Val v="80.212" /></Row>
              <Row label="Location"><Place /></Row>
            </Section>
            <Section title="Target">
              <Row label="X Target"><Val v="24.476" /></Row>
              <Row label="Y Target"><Val v="-17.833" /></Row>
              <Row label="Z Target"><Val v="0.0" /></Row>
              <Row label="Location"><Place /></Row>
            </Section>
            <Section title="Wallpaper">
              <Row label="Filename"><Val v="(none)" btn="..." /></Row>
              <Row label="Show"><span className="pl-[3px] pt-[4px]"><Check on /></span></Row>
              <Row label="Gray"><span className="pl-[3px] pt-[4px]"><Check on /></span></Row>
            </Section>
          </div>
        </div>
      </div>

      {/* osnap row */}
      <div className="h-[26px] flex items-center pl-[12px] text-[#333c46] shrink-0">
        {snaps.map(([l, w, on, dim]) => (
          <div key={l} className="flex items-center gap-[3px]" style={{ width: w }}>
            <Check on={on} dim={dim} />
            <span>{l}</span>
          </div>
        ))}
      </div>

      {/* status bar */}
      <div className="h-[22px] border-t border-[#c5cde0] flex items-stretch text-[#333c46] shrink-0">
        {status.map(([l, w]) => (
          <div key={l} className="border-r border-[#d0d5df] text-center leading-[21px]" style={{ width: w }}>{l}</div>
        ))}
        <div className="w-[209px] flex items-center pl-[5px] gap-[3px]"><span className="w-[12px] h-[13px] bg-black" />Default</div>
        {toggles.map(([l, w, on]) => (
          <div key={l} className={`border-r border-[#d0d5df] text-center leading-[21px] whitespace-nowrap ${on ? 'bg-[#cfd8ee] font-bold text-[#222]' : ''}`} style={{ width: w }}>{l}</div>
        ))}
        <div className="pl-[1px] leading-[21px]">Available physical memory: 3413 MB</div>
      </div>

      <Taskbar />
    </div>
  );
}
